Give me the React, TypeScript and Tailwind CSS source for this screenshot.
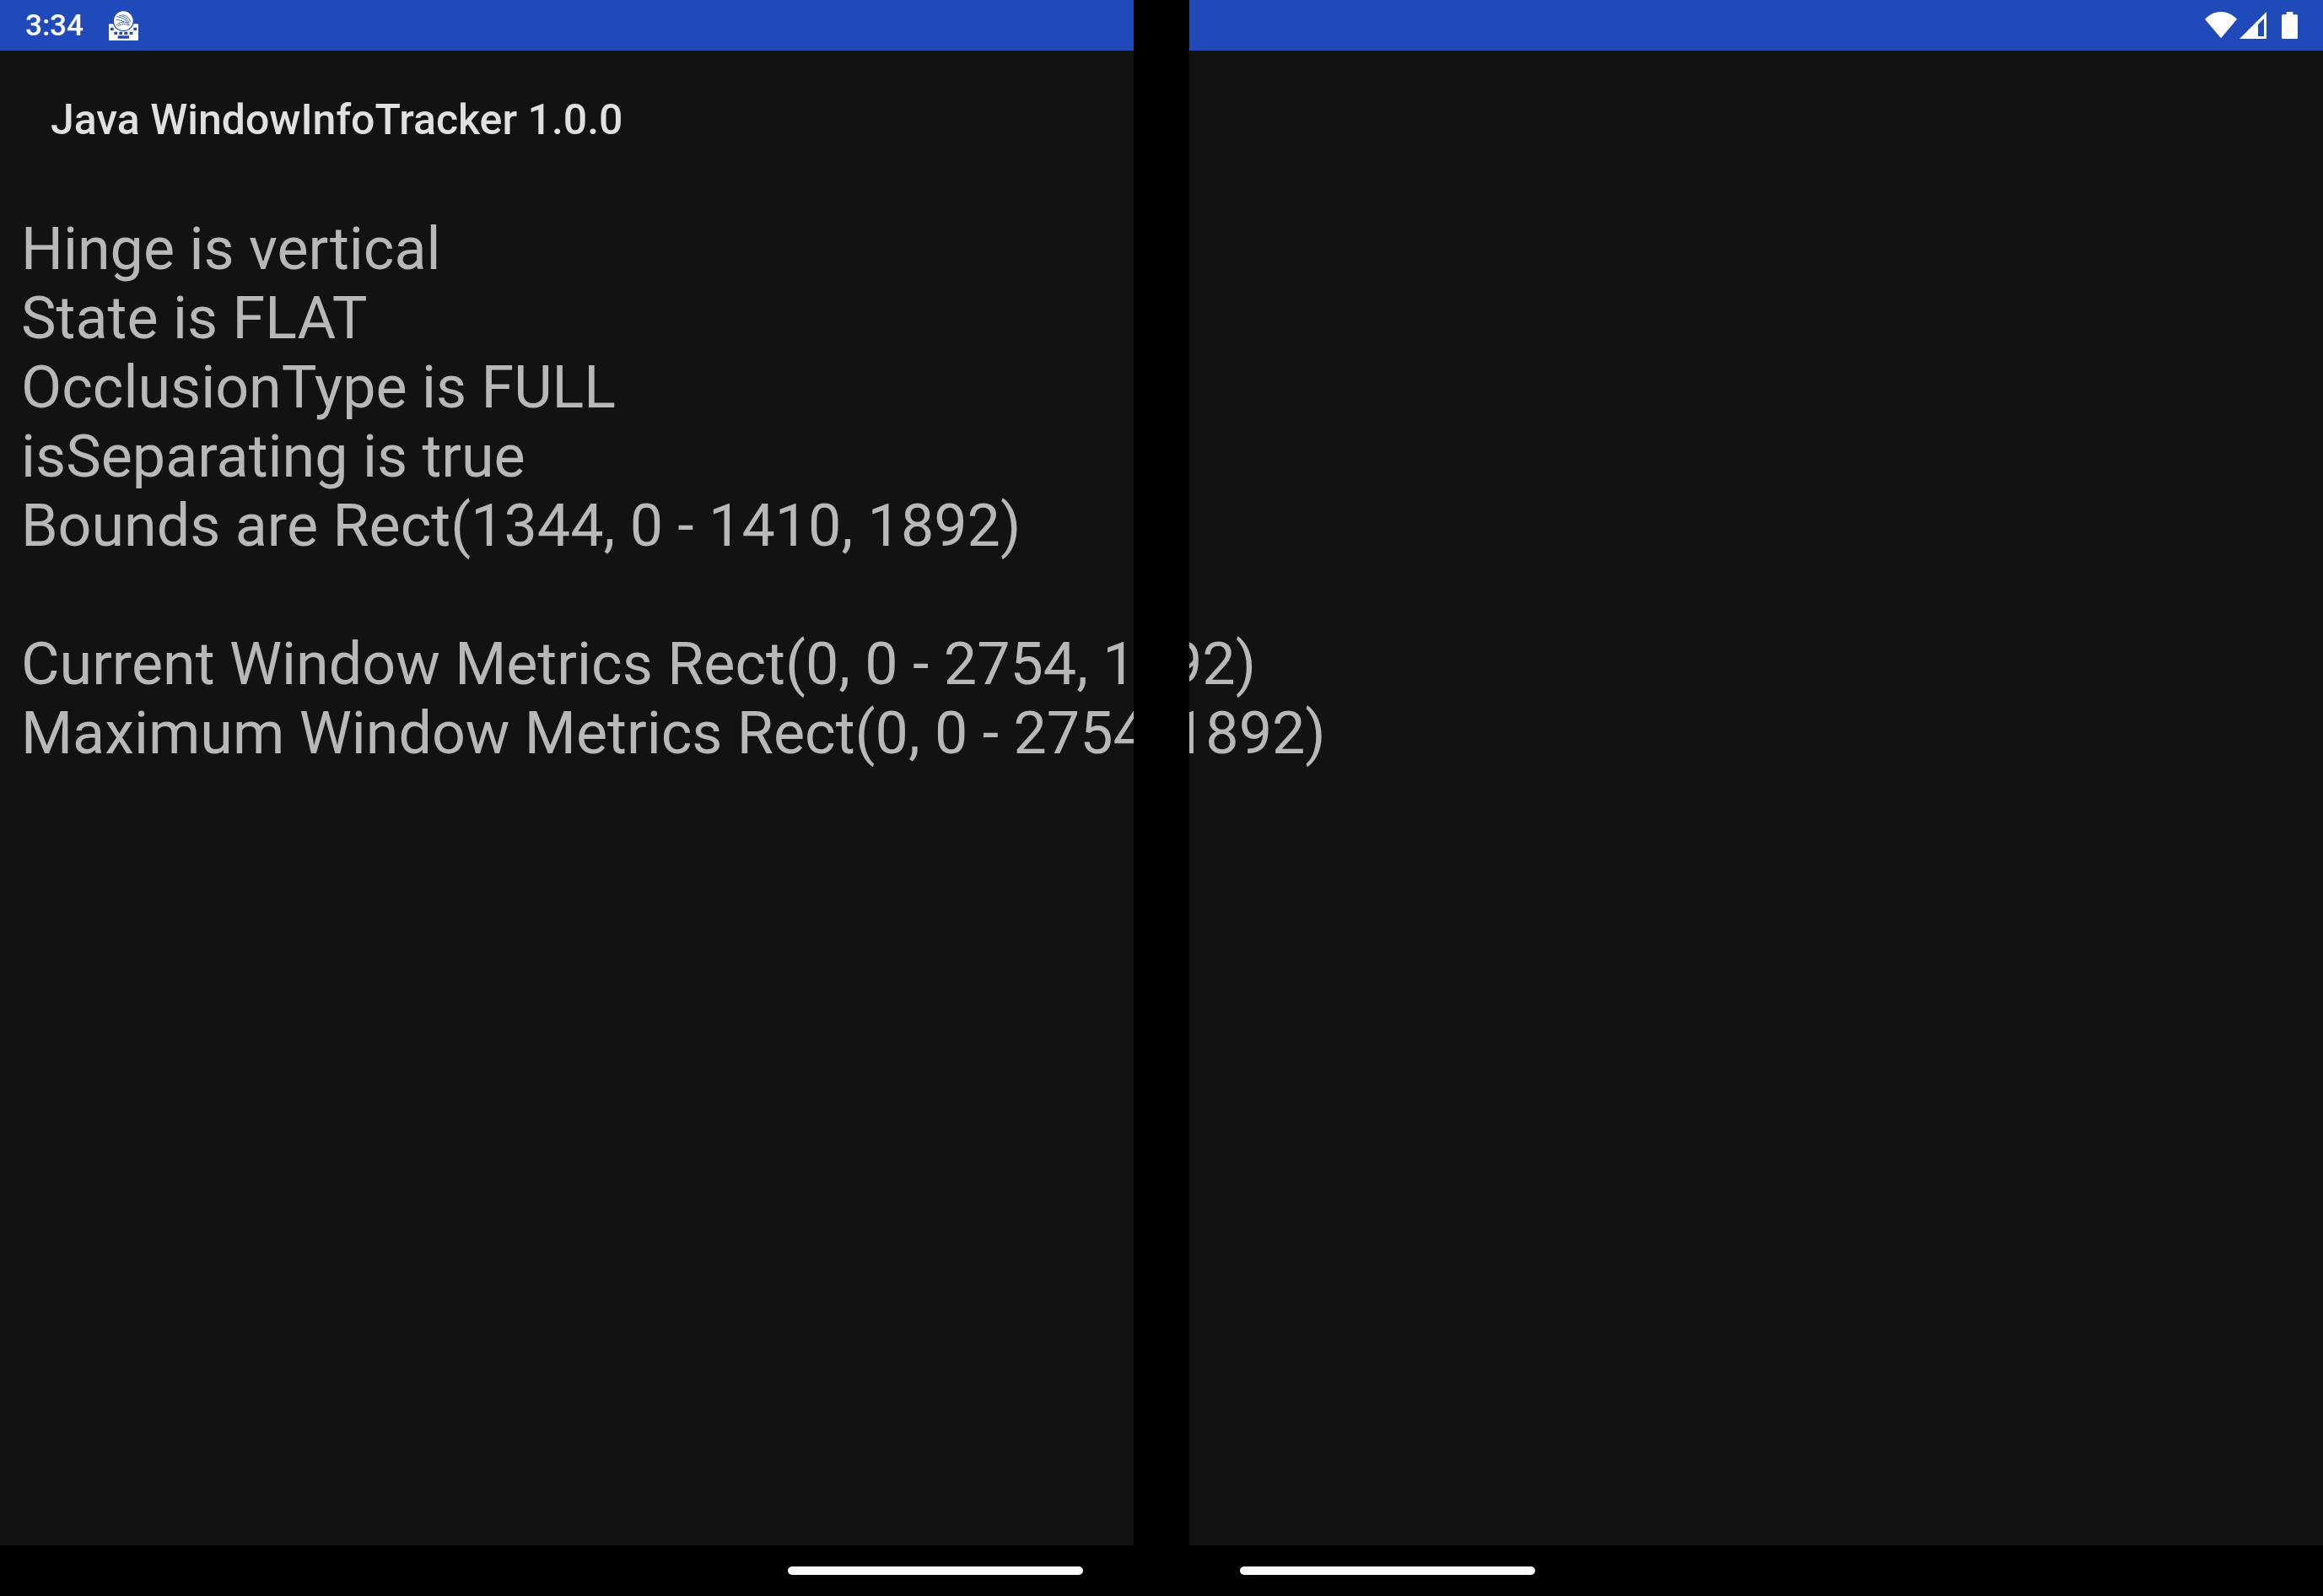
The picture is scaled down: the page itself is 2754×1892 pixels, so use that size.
import React from "react";

const featureLines = [
  "Hinge is vertical",
  "State is FLAT",
  "OcclusionType is FULL",
  "isSeparating is true",
  "Bounds are Rect(1344, 0 - 1410, 1892)",
];

const metricLines = [
  "Current Window Metrics Rect(0, 0 - 2754, 1892)",
  "Maximum Window Metrics Rect(0, 0 - 2754, 1892)",
];

function KeyboardIcon() {
  return (
    <svg viewBox="0 0 105 105" className="size-[35px]" aria-hidden="true">
      <path
        d="M2 46H15A39 39 0 0 0 89 46H103Q105 46 105 48V103Q105 105 103 105H2Q0 105 0 103V48Q0 46 2 46Z"
        fill="#fff"
      />
      <circle cx="52" cy="35" r="34" fill="#fff" />
      <path
        fill="#204aba"
        d="M6 59H17V69H6ZM88 59H99V69H88ZM19 74H30V84H19ZM37 74H48V84H37ZM55 74H67V84H55ZM74 74H85V84H74ZM32 88H72V98H32Z"
      />
      <g fill="none" stroke="#204aba" strokeWidth="2.5" strokeLinecap="round">
        <path d="M29 20C42 21 58 28 67 41" />
        <path d="M38 16C54 18 66 27 72 41" />
        <path d="M48 14C62 16 72 24 77 37" />
        <path d="M27 31C38 32 46 34 54 39C44 39 36 43 28 50" />
        <path d="M54 39C61 40 68 43 74 48" />
        <path d="M33 53C46 45 60 45 72 51" />
      </g>
    </svg>
  );
}

function WifiIcon() {
  return (
    <svg viewBox="0 0 114 96" className="h-8 w-[38px]" aria-hidden="true">
      <path d="M57 94L0 26C16 9 36 0 57 0S98 9 114 26Z" fill="#fff" />
    </svg>
  );
}

function SignalIcon() {
  return (
    <svg viewBox="0 0 96 96" className="size-8" aria-hidden="true">
      <path d="M0 96L96 0V96ZM66 87H87V24L66 45Z" fill="#fff" fillRule="evenodd" />
    </svg>
  );
}

function BatteryIcon() {
  return (
    <svg viewBox="0 0 57 96" className="h-8 w-[19px]" aria-hidden="true">
      <path
        d="M17 0H40V10H53Q57 10 57 14V92Q57 96 53 96H4Q0 96 0 92V14Q0 10 4 10H17Z"
        fill="#fff"
      />
    </svg>
  );
}

function InfoLine({ children }: { children: React.ReactNode }) {
  return <p className="whitespace-nowrap">{children}</p>;
}

export default function App() {
  return (
    <div className="relative flex min-h-screen flex-col overflow-hidden bg-[#121212] font-['Roboto',sans-serif]">
      <header className="flex h-[60px] items-center justify-between bg-[#204aba] px-[30px] text-white">
        <div className="flex items-center gap-[30px]">
          <time className="text-[35px] leading-[43px] font-medium">3:34</time>
          <KeyboardIcon />
        </div>
        <div className="flex items-center">
          <WifiIcon />
          <span className="ml-[3px] flex">
            <SignalIcon />
          </span>
          <span className="ml-[18px] flex">
            <BatteryIcon />
          </span>
        </div>
      </header>

      <div className="flex h-[164px] items-center px-[60px]">
        <h1 className="text-[50px] leading-[60px] font-medium whitespace-nowrap text-[#e0e0e0]">
          Java WindowInfoTracker 1.0.0
        </h1>
      </div>

      <main className="flex-1 px-[25px] pt-[30px] text-[70px] leading-[82px] text-[#b8b8b8]">
        <section>
          {featureLines.map((line) => (
            <InfoLine key={line}>{line}</InfoLine>
          ))}
        </section>
        <section className="mt-[82px]">
          {metricLines.map((line) => (
            <InfoLine key={line}>{line}</InfoLine>
          ))}
        </section>
      </main>

      <nav className="grid h-[60px] grid-cols-2 items-center gap-[66px] bg-black px-[60px]" aria-label="System navigation">
        <button type="button" aria-label="Home" className="mr-[60px] h-2.5 w-[350px] justify-self-end rounded-full bg-[#fafafa]" />
        <button type="button" aria-label="Home, second screen" className="ml-[60px] h-2.5 w-[350px] rounded-full bg-[#fafafa]" />
      </nav>

      <div className="absolute inset-y-0 left-1/2 w-[66px] -translate-x-1/2 bg-black" aria-hidden="true" />
    </div>
  );
}
